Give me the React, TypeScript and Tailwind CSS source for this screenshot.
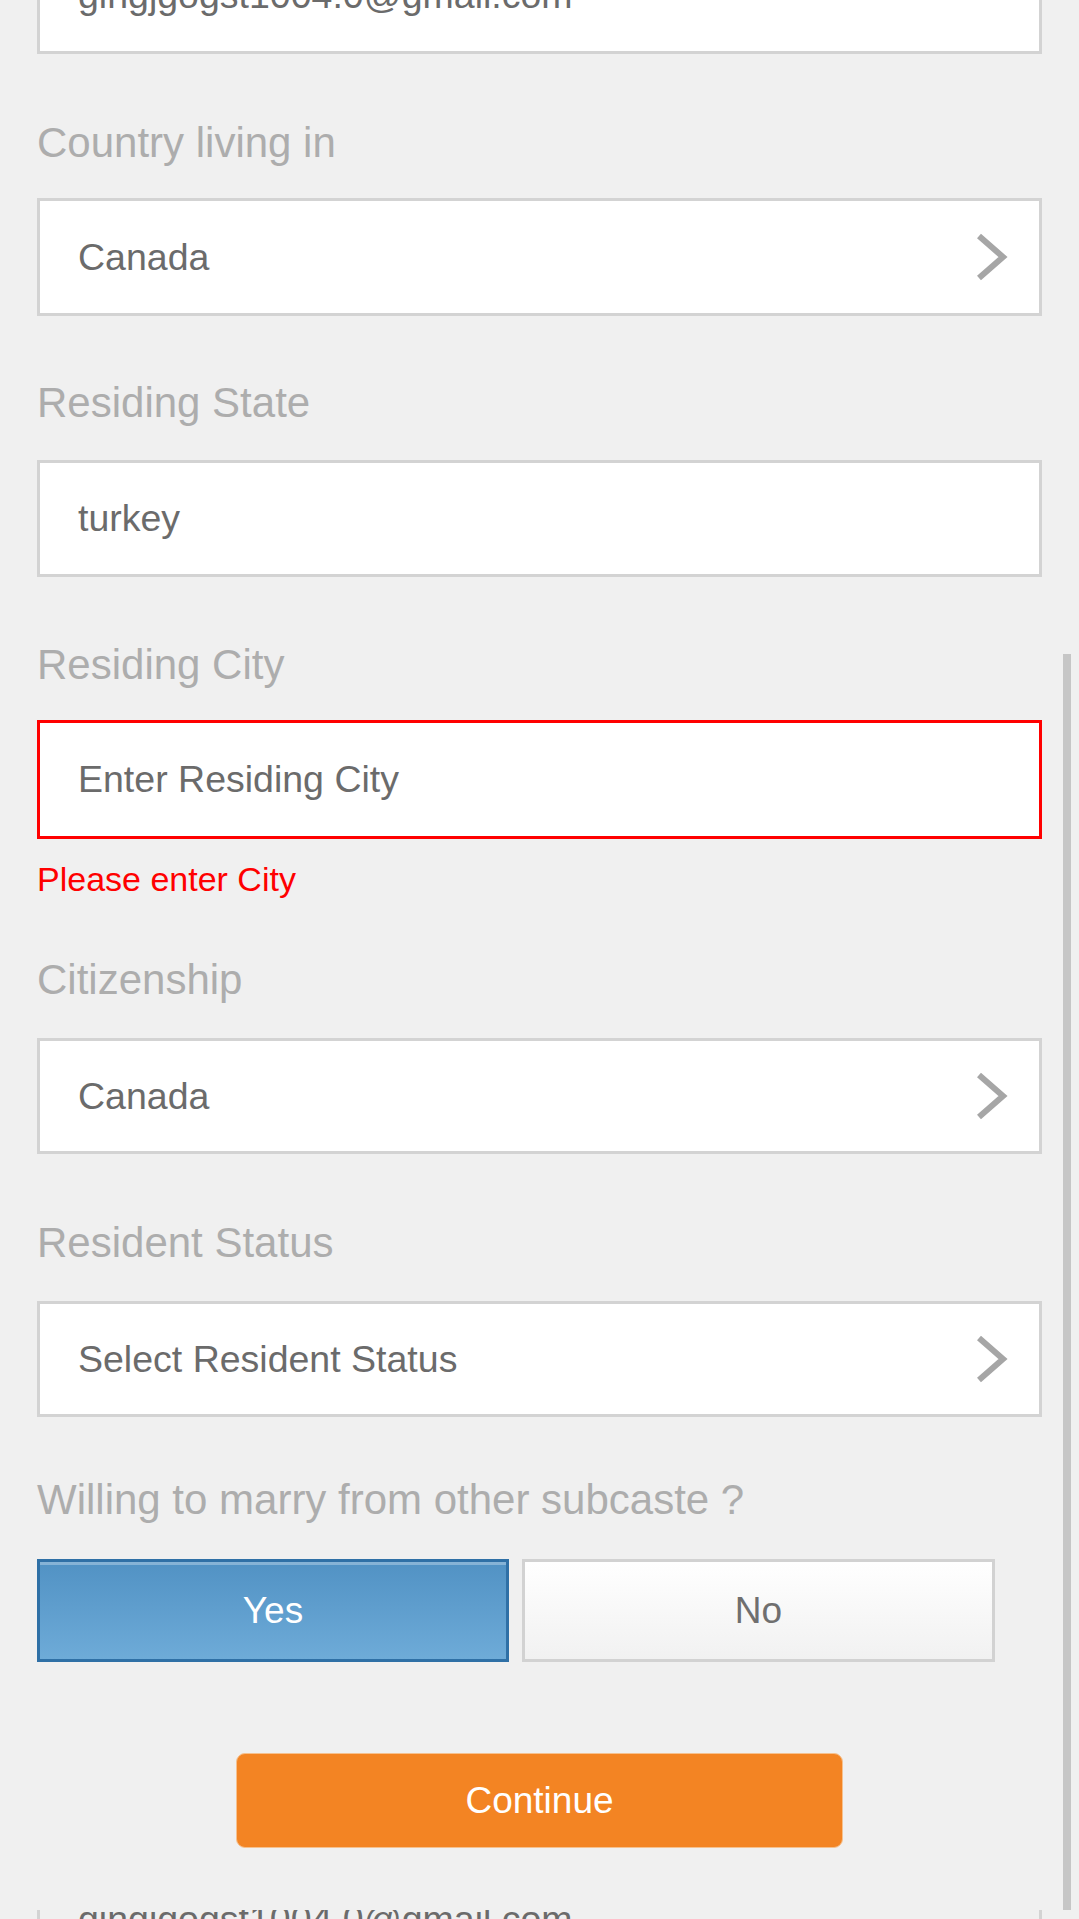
const Chevron = () => (
	<svg width="34" height="50" viewBox="0 0 34 50" fill="none">
		<path d="M5 4 L29 25 L5 46" stroke="#a6a6a6" strokeWidth="6" />
	</svg>
);

const Label = ({ text, className }: { text: string; className: string }) => (
	<p className={`h-[42px] shrink-0 pl-[37px] text-[42px] leading-[42px] text-[#adadad] ${className}`}>{text}</p>
);

const Box = ({
	value,
	select,
	className,
}: {
	value: string;
	select?: boolean;
	className: string;
}) => (
	<div
		className={`mx-[37px] flex shrink-0 items-center justify-between border-[3px] bg-white pl-[38px] pr-[31px] text-[37.5px] text-[#6b6b6b] ${className}`}
	>
		<span>{value}</span>
		{select && <Chevron />}
	</div>
);

const App = () => {
	return (
		<div className="relative h-[1919px] w-[1079px] overflow-hidden bg-[#f0f0f0] font-['Liberation_Sans',Arial,sans-serif]">
			<div className="-mt-[63px] flex flex-col">
				<Box value="gingjgogst1004.0@gmail.com" className="h-[117px] border-[#d3d3d3]" />

				<Label text="Country living in" className="mt-[68px]" />
				<Box value="Canada" select className="mt-[34px] h-[118px] border-[#d3d3d3]" />

				<Label text="Residing State" className="mt-[66px]" />
				<Box value="turkey" className="mt-[36px] h-[117px] border-[#d3d3d3]" />

				<Label text="Residing City" className="mt-[67px]" />
				<Box value="Enter Residing City" className="mt-[34px] h-[119px] border-[#ff0000]" />
				<p className="mt-[23px] h-[34px] shrink-0 pl-[37px] text-[34px] leading-[34px] text-[#ff0000]">Please enter City</p>

				<Label text="Citizenship" className="mt-[63px]" />
				<Box value="Canada" select className="mt-[37px] h-[116px] border-[#d3d3d3]" />

				<Label text="Resident Status" className="mt-[68px]" />
				<Box value="Select Resident Status" select className="mt-[37px] h-[116px] border-[#d3d3d3]" />

				<Label text="Willing to marry from other subcaste ?" className="mt-[62px]" />
				<div className="mx-[37px] mt-[38px] flex shrink-0 gap-[13px] text-[37px]">
					<button className="flex h-[103px] w-[472px] items-center justify-center border-[3px] border-[#2f70a6] bg-linear-to-b from-[#5192c4] to-[#6eabd8] text-white shadow-[inset_0_3px_0_rgba(255,255,255,0.3)]">
						Yes
					</button>
					<button className="flex h-[103px] w-[473px] items-center justify-center border-[3px] border-[#d2d2d2] bg-linear-to-b from-white to-[#f1f1f1] text-[#6f6f6f]">
						No
					</button>
				</div>

				<button className="mx-auto mt-[91px] flex h-[95px] w-[607px] shrink-0 items-center justify-center rounded-[9px] border border-[#f6c18e] bg-[#f38423] text-[37px] text-white">
					Continue
				</button>

				<div className="mx-[37px] mt-[62px] h-[9px] shrink-0 overflow-hidden border-x-[3px] border-[#d3d3d3]">
					<p className="-mt-[9px] pl-[38px] text-[37.5px] leading-[37.5px] text-[#6b6b6b]">gingjgogst1004.0@gmail.com</p>
				</div>
			</div>

			<div className="absolute left-[1063px] top-[654px] h-[1256px] w-[8px] bg-[#c6c6c6]"></div>
		</div>
	);
};

export default App;
